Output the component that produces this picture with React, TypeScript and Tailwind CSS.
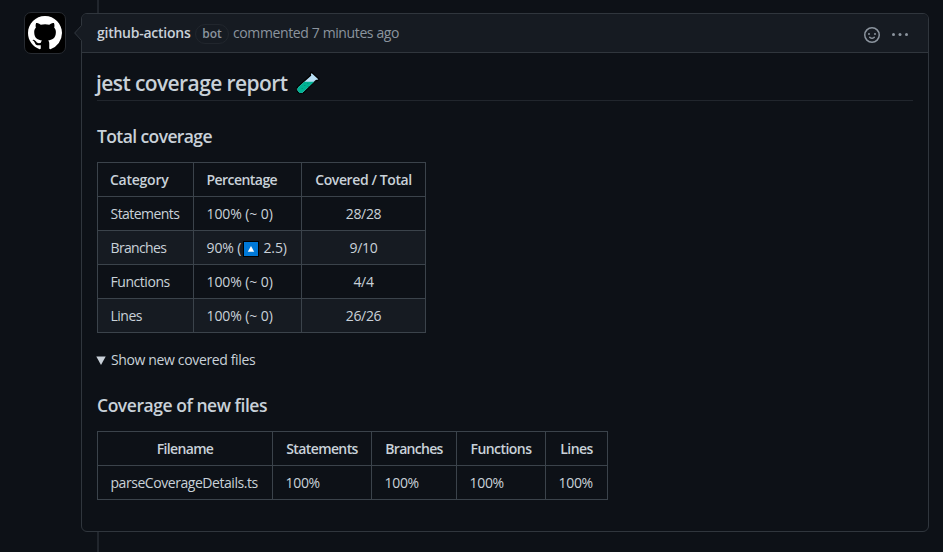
import React from 'react';

type Column = { label: string; width: string; align: string; tracking: string };

const totalColumns: Column[] = [
  { label: 'Category', width: 'w-[96px]', align: 'text-left pl-3', tracking: 'tracking-[-0.25px]' },
  { label: 'Percentage', width: 'w-[108px]', align: 'text-left pl-[12.5px]', tracking: 'tracking-[-0.55px]' },
  { label: 'Covered / Total', width: 'w-[124px]', align: 'text-center', tracking: 'tracking-[-0.4px]' },
];

const totals = [
  { name: 'Statements', delta: '~ 0', percent: '100%', ratio: '28/28', tracking: 'tracking-[-0.55px]' },
  { name: 'Branches', delta: 'up', percent: '90%', ratio: '9/10', tracking: 'tracking-[-0.65px]' },
  { name: 'Functions', delta: '~ 0', percent: '100%', ratio: '4/4', tracking: 'tracking-[-0.45px]' },
  { name: 'Lines', delta: '~ 0', percent: '100%', ratio: '26/26', tracking: 'tracking-[-0.5px]' },
];

const fileColumns: Column[] = [
  { label: 'Filename', width: 'w-[175px]', align: 'text-center', tracking: 'tracking-[-0.65px]' },
  { label: 'Statements', width: 'w-[99px]', align: 'text-center', tracking: 'tracking-[-0.6px]' },
  { label: 'Branches', width: 'w-[85px]', align: 'text-center', tracking: 'tracking-[-0.7px]' },
  { label: 'Functions', width: 'w-[89px]', align: 'text-center', tracking: 'tracking-[-0.55px]' },
  { label: 'Lines', width: 'w-[62px]', align: 'text-center', tracking: 'tracking-[-0.6px]' },
];

const cell = 'whitespace-nowrap border-b border-r border-[#3b434b] py-0 pr-0';

function HeadRow({ columns }: { columns: Column[] }) {
  return (
    <tr className="h-[34px]">
      {columns.map((c) => (
        <th key={c.label} className={`${cell} ${c.width} ${c.align} ${c.tracking} font-semibold`}>
          {c.label}
        </th>
      ))}
    </tr>
  );
}

function UpBadge() {
  return (
    <svg className="ml-[1.5px] mr-px inline-block h-4 w-4 align-[-4px]" viewBox="0 0 16 16">
      <rect width="16" height="16" fill="#000" />
      <rect x="1" y="1" width="14" height="14" fill="#0078d7" />
      <path d="M8 5 11.2 10.8H4.8z" fill="#fff" />
    </svg>
  );
}

function TestTube() {
  return (
    <svg className="h-6 w-6" viewBox="0 0 24 24">
      <path
        d="M15.6 1.3 23 8 21.4 9.6 20.2 9.4 8 21.2a4.1 4.1 0 0 1-5.9-5.7L14.6 4.3 14.2 2.8z"
        fill="#b8dff5"
        stroke="#000"
        strokeWidth="1.3"
        strokeLinejoin="round"
      />
      <path d="M8.3 10.7h9.8L7.5 20.8a3.4 3.4 0 0 1-5-4.8z" fill="#00b294" />
      <path d="M11 12.5h1.5M8 14.5h1.5M11.5 15.5H13M5.5 17.5H7" stroke="#009a80" />
    </svg>
  );
}

export default function App() {
  return (
    <div className="flex h-[552px] w-[943px] overflow-hidden bg-[#0d1117] pl-6 font-['Open_Sans','Noto_Sans',sans-serif] text-[14px] leading-5 text-[#c9d1d9]">
      <div className="mt-3 flex h-[42px] w-[42px] shrink-0 items-center justify-center rounded-[7px] border border-[#272b31] bg-black">
        <svg className="h-[34px] w-[34px]" viewBox="0 0 16 16" fill="#fff">
          <path d="M8 0C3.58 0 0 3.58 0 8c0 3.54 2.29 6.53 5.47 7.59.4.07.55-.17.55-.38 0-.19-.01-.82-.01-1.49-2.01.37-2.53-.49-2.69-.94-.09-.23-.48-.94-.82-1.13-.28-.15-.68-.52-.01-.53.63-.01 1.08.58 1.23.82.72 1.21 1.87.87 2.33.66.07-.52.28-.87.51-1.07-1.78-.2-3.64-.89-3.64-3.95 0-.87.31-1.59.82-2.15-.08-.2-.36-1.02.08-2.12 0 0 .67-.21 2.2.82.64-.18 1.32-.27 2-.27s1.36.09 2 .27c1.53-1.04 2.2-.82 2.2-.82.44 1.1.16 1.92.08 2.12.51.56.82 1.27.82 2.15 0 3.07-1.87 3.75-3.65 3.95.29.25.54.73.54 1.48 0 1.07-.01 1.93-.01 2.2 0 .21.15.46.55.38A8.01 8.01 0 0 0 16 8c0-4.42-3.58-8-8-8z" />
        </svg>
      </div>
      <div className="ml-[15px] flex w-[848px] flex-col">
        <div className="ml-4 h-[13px] w-0.5 shrink-0 bg-[#21262d]" />
        <main className="relative flex h-[519px] shrink-0 flex-col rounded-md border border-[#30363d]">
          <svg className="absolute -left-[8px] top-[11px] h-4 w-2" viewBox="0 0 8 16">
            <path d="M8 0 0 8l8 8z" fill="#161b22" />
            <path d="M7.5.5 0.7 8l6.8 7.5" fill="none" stroke="#30363d" />
          </svg>
          <header className="flex h-[39px] shrink-0 items-center rounded-t-[5px] border-b border-[#30363d] bg-[#161b22] pl-[15px] pr-5">
            <span className="w-[93px] whitespace-nowrap font-semibold tracking-[-0.25px]">github-actions</span>
            <span className="ml-[5px] mt-px flex h-5 w-[34px] items-center justify-center rounded-full border border-[#21262d] text-[12px] font-semibold text-[#8b949e]">
              bot
            </span>
            <span className="ml-[4px] whitespace-nowrap tracking-[-0.38px] text-[#8b949e]">commented 7 minutes ago</span>
            <svg className="ml-auto mt-1 h-4 w-4" viewBox="0 0 16 16" fill="#8b949e">
              <path
                fillRule="evenodd"
                d="M1.5 8a6.5 6.5 0 1113 0 6.5 6.5 0 01-13 0zM8 0a8 8 0 100 16A8 8 0 008 0zM5 8a1 1 0 100-2 1 1 0 000 2zm7-1a1 1 0 11-2 0 1 1 0 012 0zM5.32 9.636a.75.75 0 011.038.175l.007.009c.103.118.22.222.35.31.264.178.683.37 1.285.37.602 0 1.02-.192 1.285-.371.13-.088.247-.192.35-.31l.007-.008a.75.75 0 111.222.87c-.2.28-.43.48-.73.68-.63.418-1.37.638-2.127.629-.946 0-1.652-.308-2.126-.63a3.331 3.331 0 01-.75-.68.75.75 0 01.183-1.044z"
              />
            </svg>
            <svg className="ml-3 mt-1 h-4 w-4" viewBox="0 0 16 16" fill="#8b949e">
              <circle cx="1.5" cy="7.5" r="1.5" />
              <circle cx="8" cy="7.5" r="1.5" />
              <circle cx="14.5" cy="7.5" r="1.5" />
            </svg>
          </header>
          <div className="flex flex-col px-[15px]">
            <h1 className="flex h-[48px] items-center border-b border-[#21262d] pt-3 text-[21px] font-semibold tracking-[-0.6px]">
              <span className="-ml-px w-[200px] whitespace-nowrap">jest coverage report</span>
              <TestTube />
            </h1>
            <h3 className="mt-[23px] h-6 text-[17.5px] font-semibold leading-6 tracking-[-0.6px]">Total coverage</h3>
            <table className="mt-[14px] w-[329px] table-fixed border-separate border-spacing-0 border-l border-t border-[#3b434b]">
              <thead>
                <HeadRow columns={totalColumns} />
              </thead>
              <tbody>
                {totals.map((row, i) => (
                  <tr key={row.name} className={i % 2 ? 'h-[34px] bg-[#161b22]' : 'h-[34px]'}>
                    <td className={`${cell} ${row.tracking} pl-[12.5px]`}>{row.name}</td>
                    <td className={`${cell} pl-[12.5px] tracking-[-0.1px]`}>
                      {row.percent} ({row.delta === 'up' ? <><UpBadge /> 2.5</> : row.delta})
                    </td>
                    <td className={`${cell} text-center tracking-[-0.3px]`}>{row.ratio}</td>
                  </tr>
                ))}
              </tbody>
            </table>
            <div className="mt-[17px] flex h-5 items-center tracking-[-0.36px]">
              <svg className="-ml-px h-[9px] w-[10px]" viewBox="0 0 10 9">
                <path d="M.3.5h9.4L5 9z" fill="#c9d1d9" />
              </svg>
              <span className="ml-[5px]">Show new covered files</span>
            </div>
            <h3 className="mt-[23px] h-6 text-[17.5px] font-semibold leading-6 tracking-[-0.45px]">
              Coverage of new files
            </h3>
            <table className="mt-[14px] w-[511px] table-fixed border-separate border-spacing-0 border-l border-t border-[#3b434b]">
              <thead>
                <HeadRow columns={fileColumns} />
              </thead>
              <tbody>
                <tr className="h-[34px]">
                  <td className={`${cell} pl-[12.5px] tracking-[-0.45px]`}>parseCoverageDetails.ts</td>
                  {fileColumns.slice(1).map((c) => (
                    <td key={c.label} className={`${cell} pl-[12.5px] tracking-[-0.3px]`}>
                      100%
                    </td>
                  ))}
                </tr>
              </tbody>
            </table>
          </div>
        </main>
        <div className="ml-4 h-5 w-0.5 shrink-0 bg-[#21262d]" />
      </div>
    </div>
  );
}
